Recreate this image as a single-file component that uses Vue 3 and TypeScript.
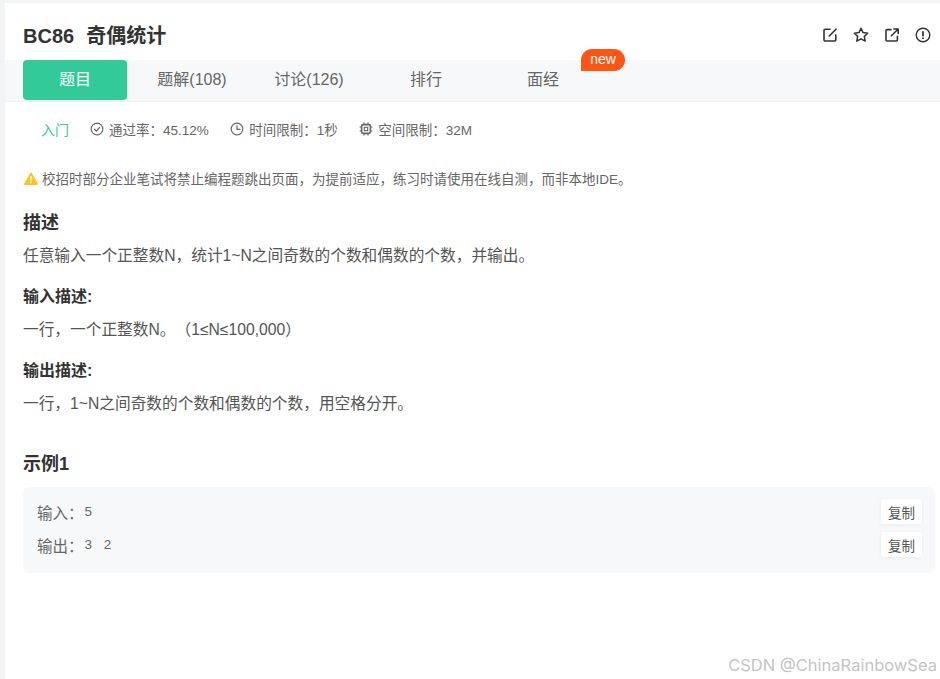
<script setup lang="ts">
const tabs: { label: string; active?: boolean; badge?: string }[] = [
  { label: '题目', active: true },
  { label: '题解(108)' },
  { label: '讨论(126)' },
  { label: '排行' },
  { label: '面经', badge: 'new' },
]
const samples = [
  { label: '输入：', value: '5' },
  { label: '输出：', value: '3 2' },
]
</script>

<template>
  <div class="page">
    <main class="panel">
      <header class="head">
        <h1 class="title"><span class="code">BC86</span>奇偶统计</h1>
        <div class="actions">
          <svg class="act" viewBox="0 0 16 16" fill="none" stroke="#333" stroke-width="1.6" stroke-linecap="round" stroke-linejoin="round">
            <path d="M8 2.2H3.2a1.2 1.2 0 0 0-1.2 1.2v9.4a1.2 1.2 0 0 0 1.2 1.2h9.4a1.2 1.2 0 0 0 1.2-1.2V8" />
            <path d="M14 2.2 7.2 9" />
          </svg>
          <svg class="act" viewBox="0 0 16 16" fill="none" stroke="#333" stroke-width="1.5" stroke-linejoin="round">
            <path d="M8 1.3l2 4.3 4.7.6-3.4 3.2.9 4.7L8 11.8l-4.2 2.3.9-4.7L1.3 6.2 6 5.6z" />
          </svg>
          <svg class="act" viewBox="0 0 16 16" fill="none" stroke="#333" stroke-width="1.6" stroke-linecap="round" stroke-linejoin="round">
            <path d="M7 2.6H3a1 1 0 0 0-1 1V13a1 1 0 0 0 1 1h9.4a1 1 0 0 0 1-1V9.4" />
            <path d="M7.4 8.8 14 2.2M9.8 2h4.4v4.4" />
          </svg>
          <svg class="act" viewBox="0 0 16 16" fill="none" stroke="#333" stroke-width="1.4">
            <circle cx="8" cy="8" r="6.8" />
            <path d="M8 4.2v5" stroke-width="1.8" />
            <path d="M8 10.4v1.5" stroke-width="1.8" />
          </svg>
        </div>
      </header>

      <nav class="tabs">
        <div v-for="t in tabs" :key="t.label" class="tab" :class="{ active: t.active }">
          {{ t.label }}
          <span v-if="t.badge" class="badge">{{ t.badge }}</span>
        </div>
      </nav>

      <div class="meta">
        <span class="level">入门</span>
        <span class="meta-item">
          <svg class="mi" viewBox="0 0 14 14" fill="none" stroke="#666" stroke-width="1.2">
            <circle cx="7" cy="7" r="5.8" />
            <path d="M4.4 7.2 6.3 9l3.4-3.6" stroke-linecap="round" stroke-linejoin="round" />
          </svg>
          通过率：45.12%
        </span>
        <span class="meta-item">
          <svg class="mi" viewBox="0 0 14 14" fill="none" stroke="#666" stroke-width="1.2">
            <circle cx="7" cy="7" r="5.8" />
            <path d="M7 3.6V7.4h3" stroke-linecap="round" stroke-linejoin="round" />
          </svg>
          时间限制：1秒
        </span>
        <span class="meta-item">
          <svg class="mi" viewBox="0 0 14 14" fill="none" stroke="#666" stroke-width="1.2">
            <rect x="2.6" y="2.6" width="8.8" height="8.8" rx="1.6" stroke-width="1.6" />
            <rect x="5.3" y="5.3" width="3.4" height="3.4" stroke-width="1.1" />
            <path d="M5 .6v2M9 .6v2M5 11.4v2M9 11.4v2M.6 5h2M.6 9h2M11.4 5h2M11.4 9h2" stroke-width="1.2" />
          </svg>
          空间限制：32M
        </span>
      </div>

      <p class="warn">
        <svg class="warn-ic" viewBox="0 0 14 13">
          <path d="M7 .6a.9.9 0 0 1 .8.5l6 10.4a.9.9 0 0 1-.8 1.4H1a.9.9 0 0 1-.8-1.4l6-10.4A.9.9 0 0 1 7 .6z" fill="#fcc32c" />
          <path d="M7 4.2v4.2M7 9.6v1.3" stroke="#fff" stroke-width="1.3" />
        </svg>
        校招时部分企业笔试将禁止编程题跳出页面，为提前适应，练习时请使用在线自测，而非本地IDE。
      </p>

      <h2 class="h-lg first">描述</h2>
      <p class="body">任意输入一个正整数N，统计1~N之间奇数的个数和偶数的个数，并输出。</p>
      <h3 class="h-md">输入描述:</h3>
      <p class="body">一行，一个正整数N。（1≤N≤100,000）</p>
      <h3 class="h-md">输出描述:</h3>
      <p class="body">一行，1~N之间奇数的个数和偶数的个数，用空格分开。</p>

      <h2 class="h-lg sample-title">示例1</h2>
      <section class="sample">
        <div v-for="s in samples" :key="s.label" class="sample-row">
          <span class="sample-label">{{ s.label }}</span>
          <code class="sample-value">{{ s.value }}</code>
          <button class="copy" type="button">复制</button>
        </div>
      </section>
    </main>
    <div class="watermark">CSDN @ChinaRainbowSea</div>
  </div>
</template>

<style>
html, body { margin: 0; background: #fff; }
</style>

<style scoped>
.page {
  position: relative;
  width: 940px;
  height: 679px;
  overflow: hidden;
  box-sizing: border-box;
  padding: 3px 0 0 5px;
  background: #f3f4f5;
  font-family: "Liberation Sans", "Noto Sans CJK SC", sans-serif;
  color: #555;
  text-spacing-trim: space-all;
}
.panel {
  height: 100%;
  box-sizing: border-box;
  background: #fff;
  padding-bottom: 20px;
}
.head {
  display: flex;
  align-items: center;
  justify-content: space-between;
  height: 57px;
  padding: 5px 9px 0 18px;
  box-sizing: border-box;
}
.title {
  margin: 0;
  font-size: 20px;
  font-weight: 700;
  color: #333;
}
.code { margin-right: 12px; }
.actions { display: flex; gap: 15px; margin-top: 2px; }
.act { width: 16px; height: 16px; display: block; }
.tabs {
  display: flex;
  gap: 13px;
  height: 42px;
  padding-left: 18px;
  background: #f7f8fa;
  border-bottom: 1px solid #f0f1f3;
  box-sizing: border-box;
}
.tab {
  position: relative;
  width: 104px;
  height: 40px;
  line-height: 40px;
  text-align: center;
  font-size: 16px;
  color: #666;
  border-radius: 4px;
}
.tab.active { background: #32ca99; color: #fff; }
.badge {
  position: absolute;
  left: 90px;
  top: -11px;
  width: 44px;
  height: 22px;
  line-height: 20px;
  border-radius: 11px 11px 11px 0;
  background: #fe5516;
  color: #fff;
  font-size: 14px;
}
.meta {
  display: flex;
  align-items: center;
  height: 20px;
  margin-top: 17px;
  padding-left: 36px;
  font-size: 13.5px;
  color: #666;
}
.level { color: #32ca99; font-size: 14px; margin-right: 21px; }
.meta-item { display: flex; align-items: center; gap: 5px; margin-right: 21.5px; }
.mi { width: 14px; height: 14px; display: block; }
.warn {
  display: flex;
  align-items: center;
  gap: 4px;
  margin: 29px 0 0 19px;
  height: 20px;
  font-size: 13.5px;
  color: #666;
}
.warn-ic { width: 14px; height: 13px; display: block; }
.h-lg { margin: 0 0 0 18px; font-size: 18px; font-weight: 700; color: #333; line-height: 26px; }
.h-lg.first { margin-top: 22px; }
.h-md { margin: 18px 0 0 18px; font-size: 16px; font-weight: 700; color: #333; line-height: 24px; }
.body { margin: 9px 0 0 18px; font-size: 15.7px; color: #555; line-height: 22px; }
.h-md + .body { margin-top: 10px; }
.sample-title { margin-top: 36px; }
.sample {
  margin: 10px 0 0 18px;
  width: 912px;
  height: 86px;
  box-sizing: border-box;
  padding: 15px 13px 0 14px;
  background: #f7f8fa;
  border-radius: 6px;
}
.sample-row {
  display: flex;
  align-items: flex-start;
  height: 33px;
  font-size: 15.5px;
  color: #666;
}
.sample-label { line-height: 23px; }
.sample-value {
  font-family: "Liberation Sans", sans-serif;
  font-size: 13.5px;
  line-height: 20px;
  white-space: pre;
  word-spacing: 8px;
  margin-left: 1px;
}
.copy {
  margin: -3px 0 0 auto;
  width: 41px;
  height: 25px;
  padding: 0;
  border: 0;
  border-radius: 3px;
  background: #fff;
  box-shadow: 0 1px 4px rgba(0, 0, 0, 0.06);
  font: 13.5px "Liberation Sans", "Noto Sans CJK SC", sans-serif;
  color: #555;
}
.watermark {
  position: absolute;
  right: 3px;
  bottom: 4px;
  font-family: Inter, sans-serif;
  font-size: 16.5px;
  color: #c4c4c4;
}
</style>
